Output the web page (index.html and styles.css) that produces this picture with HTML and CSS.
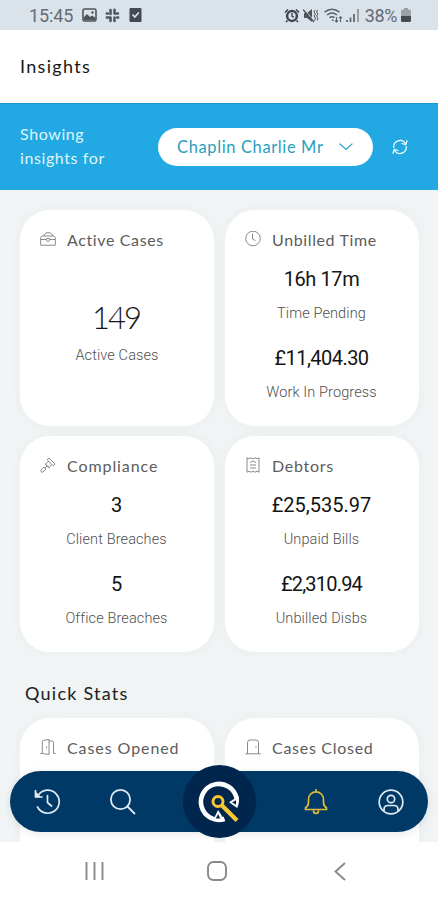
FILE: index.html
```html
<!DOCTYPE html>
<html lang="en">
<head>
<meta charset="utf-8">
<title>Insights</title>
<link rel="stylesheet" href="styles.css">
</head>
<body>
<div class="phone">
  <div class="status">
    <div class="status-left">
      <span class="time">15:45</span>
      <svg class="s-img" width="15" height="14" viewBox="0 0 15 14"><rect x="1" y="1" width="13" height="12" rx="1.5" fill="none" stroke="#4e555b" stroke-width="1.6"/><path d="M2 12V9l3-3 3 3 2-1.500 3 2V12z" fill="#4e555b"/><circle cx="10.500" cy="4.500" r="1.200" fill="#4e555b"/></svg>
      <svg class="s-slack" width="15" height="15" viewBox="0 0 15 15" fill="none" stroke="#4e555b" stroke-width="2.500" stroke-linecap="round"><path d="M5.500 2v4M1.800 5.500h1M9.500 1.800v3.700M9.500 5.500h3.500M1.800 9.500h3.700M5.500 9.500V13M9.500 9.500v3.500M12.200 9.500h1"/></svg>
      <svg width="13" height="14" viewBox="0 0 13 14"><rect x=".5" y="0" width="12" height="14" rx="1" fill="#434a51"/><path d="M3.500 6.500l2.300 2.500 4-4.500" fill="none" stroke="#dde4ea" stroke-width="1.600"/></svg>
    </div>
    <div class="status-right">
      <svg width="16" height="15" viewBox="0 0 16 15" fill="none" stroke="#3f464c"><circle cx="8" cy="8" r="4.900" stroke-width="2.500"/><path d="M8 5v3.300l2 .8" stroke-width="1.400"/><path d="M1 4.500L4 1.500M15 4.500L12 1.500M3.500 12.500L2 14M12.500 12.500L14 14" stroke-width="1.700"/></svg>
      <svg class="s-mute" width="16" height="15" viewBox="0 0 16 15"><path d="M1 5h3l5-4v13L4 10H1z" fill="#4e555b"/><path d="M1 1l11 13" stroke="#dde4ea" stroke-width="1"/><path d="M0 1.500l11 12.500" stroke="#4e555b" stroke-width="1.300"/><path d="M12 2l-1 2 1.500 2-1.500 2 1.500 2-1 2.500M14.500 2l-1 2 1.500 2-1.500 2 1.500 2-1 2.500" fill="none" stroke="#4e555b" stroke-width="1"/></svg>
      <svg class="s-wifi" width="19" height="15" viewBox="0 0 19 15" fill="none" stroke="#596067" stroke-width="1.500"><path d="M.5 4.200Q8 -1.500 15.500 4.200M3 7Q8 3 13 7M5.500 9.800Q8 7.600 10.500 9.800"/><path d="M8 11.500l1.500 1.500M12.500 9v5M11 12.500l1.500 1.500 1.500-1.500M16.500 14V8.500M15 10.200l1.500-1.500 1.500 1.500" stroke-width="1.100"/></svg>
      <svg class="s-sig" width="13" height="13" viewBox="0 0 13 13" stroke="#596067" stroke-width="1.700"><path d="M1 13v-2M4.500 13V8.500M8 13V5"/><path d="M12 13V0" stroke="#8d949a"/></svg>
      <span class="battery-text">38%</span>
      <svg width="10" height="14" viewBox="0 0 10 14"><path d="M3 0h4v1.500h1.500q1.500 0 1.500 1.500V8H0V3q0-1.500 1.500-1.500H3z" fill="#9ba2a8"/><path d="M0 8h10v4.500q0 1.500-1.500 1.500h-7Q0 14 0 12.500z" fill="#444b51"/></svg>
    </div>
  </div>

  <header class="header"><h1>Insights</h1></header>

  <section class="filter">
    <p class="filter-label">Showing<br><span>insights for</span></p>
    <div class="select"><span>Chaplin Charlie Mr</span>
      <svg width="14" height="8" viewBox="0 0 14 8" fill="none" stroke="#35a3c5" stroke-width="1.200" stroke-linecap="round"><path d="M1 1l6 5.500L13 1"/></svg>
    </div>
    <svg class="refresh" width="16" height="16" viewBox="0 0 16 16" fill="none" stroke="#fff" stroke-width="1.200" stroke-linecap="round" stroke-linejoin="round"><path d="M1.800 8.500A6.200 6.200 0 0 1 13.500 5M14.200 7.500A6.200 6.200 0 0 1 2.500 11"/><path d="M15 1.800L13.700 5.700 10 4.500M1 14.200L2.300 10.300 6 11.500"/></svg>
  </section>

  <main class="content">
    <div class="grid">
      <article class="card">
        <h2 class="tight"><svg class="icon" viewBox="0 0 16 16"><path d="M2 5h12l1.300 1.500v7.700H.7V6.500zM3.500 5L6 1.800h4.500L13 5M1 8.500h5M10 8.500h5M6.300 7.500h3.400v2L8 10.500 6.300 9.500z"/></svg><span>Active Cases</span></h2>
        <div class="metric single"><strong>149</strong><span>Active Cases</span></div>
      </article>
      <article class="card">
        <h2 class="tight"><svg class="icon" viewBox="0 0 16 16"><circle cx="8" cy="7.500" r="7.300"/><path d="M7.500 3V8l3 1.700"/></svg><span>Unbilled Time</span></h2>
        <div class="metric"><strong class="v-time">16h 17m</strong><span>Time Pending</span></div>
        <div class="metric"><strong class="v-wip">£11,404.30</strong><span>Work In Progress</span></div>
      </article>
      <article class="card">
        <h2 class="wide"><svg class="icon" viewBox="0 0 16 16"><path d="M7.200 2.800L9 1l6 6-1.800 1.800zM8.500 4.200L5.500 7.200 8.800 10.500l3-3M4.800 6.500l4.700 4.700M7 9l-2 2M5.200 10.800l.6 1.200-2.800 3q-1 .6-1.800-.2t-.1-1.900L4 10.200z"/></svg><span>Compliance</span></h2>
        <div class="metric"><strong>3</strong><span>Client Breaches</span></div>
        <div class="metric"><strong>5</strong><span>Office Breaches</span></div>
      </article>
      <article class="card">
        <h2><svg class="icon" viewBox="0 0 16 16"><path d="M2 .8l2 1 2-1 2 1 2-1 2 1 2-1v14.400l-2-1-2 1-2-1-2 1-2-1-2 1zM5 5.500l3-1.500 3 1.500M5 8h6M5 11h6"/></svg><span>Debtors</span></h2>
        <div class="metric"><strong>£25,535.97</strong><span>Unpaid Bills</span></div>
        <div class="metric"><strong class="v-disbs">£2,310.94</strong><span>Unbilled Disbs</span></div>
      </article>
    </div>
    <h3>Quick Stats</h3>
    <div class="grid">
      <article class="card">
        <h2 class="open"><svg class="icon" viewBox="0 0 16 16"><path d="M.3 14.500h2V3q0-1.500 1.500-1.700L9 .5v15l-6.700-1M9 2h3q1.500 0 1.500 1.500v11h2M6.500 7.500v1.500"/></svg><span>Cases Opened</span></h2>
      </article>
      <article class="card">
        <h2><svg class="icon" viewBox="0 0 16 16"><path d="M.3 14.800h15.400M2.500 14.800V3.500q0-2.500 2.500-2.500h6q2.500 0 2.500 2.500v11.300M11 7.500v1.500"/></svg><span>Cases Closed</span></h2>
      </article>
    </div>
  </main>

  <nav class="tabs">
    <svg width="27" height="27" viewBox="0 0 27 27" fill="none" stroke="#dfe9f3" stroke-width="1.700" stroke-linecap="round" stroke-linejoin="round"><path d="M4.500 6.800A11.500 11.500 0 1 1 3.500 19M1.500 2.500v6.500h6.500M13.500 7.500v7l4 3.500"/><path d="M2 5l3.500 3.500H2z" fill="#dfe9f3"/></svg>
    <svg width="27" height="27" viewBox="0 0 27 27" fill="none" stroke="#dfe9f3" stroke-width="1.800" stroke-linecap="round"><circle cx="11.500" cy="11.500" r="9.600"/><path d="M18.500 18.500L25.500 25.500"/></svg>
    <div class="home">
      <svg width="44" height="44" viewBox="0 0 44 44" fill="none"><path d="M39.600 18.500A18 18 0 1 0 27.500 39" stroke="#fff" stroke-width="4.600"/><path d="M32 22.200l9.500-6.200q1.500 6-1.300 12zM21 30l7 10.500q-6 1.800-12 0z" fill="#fff"/><path d="M35 22.300l4-2v4.500zM21.200 34l2 4.500h-4.500z" fill="#00264e"/><circle cx="21" cy="21.500" r="5" fill="#00264e" stroke="#f6c72f" stroke-width="3"/><path d="M25 25.500L40 40.500" stroke="#f6c72f" stroke-width="4.300"/></svg>
    </div>
    <svg class="bell" width="24" height="26" viewBox="0 0 24 26" fill="none" stroke="#dfbd3a" stroke-width="1.700" stroke-linejoin="round"><path d="M12 0v2.500M1.500 20.500v-1.800q3-1.500 3-5.500V10.300a7.500 7.500 0 0 1 15 0V13.200q0 4 3 5.500v1.800zM9.500 21.500q0 3 2.500 3t2.500-3"/></svg>
    <svg width="26" height="26" viewBox="0 0 26 26" fill="none" stroke="#dfe9f3" stroke-width="1.700"><circle cx="13" cy="13" r="11.800"/><circle cx="13" cy="10" r="3.700"/><path d="M6 22v-1.500q0-4 4-4h6q4 0 4 4V22"/></svg>
  </nav>

  <footer class="system">
    <svg width="19" height="18" viewBox="0 0 19 18" stroke="#85898c" stroke-width="1.900"><path d="M1.500 0v18M9.500 0v18M17.500 0v18"/></svg>
    <svg class="sys-home" width="20" height="20" viewBox="0 0 20 20" fill="none" stroke="#85898c" stroke-width="1.900"><rect x="1" y="1" width="18" height="18" rx="5.500"/></svg>
    <svg width="12" height="19" viewBox="0 0 12 19" fill="none" stroke="#85898c" stroke-width="1.900"><path d="M11 1L1.500 9.500 11 18"/></svg>
  </footer>
</div>
</body>
</html>
```

FILE: styles.css
```css
* { box-sizing: border-box; }
body { margin: 0; font-family: Roboto, sans-serif; background: #fff; }
h1, h2, h3, p { margin: 0; font-weight: 400; }
svg { display: block; flex: none; }
.phone { position: relative; width: 438px; height: 900px; display: flex; flex-direction: column; overflow: hidden; background: #fff; }
.status { height: 30px; flex: none; background: #dbe3ea; display: flex; justify-content: space-between; align-items: center; padding: 0 27px 0 29px; color: #656b71; font-size: 18px; }
.status-left, .status-right { display: flex; align-items: center; }
.time { width: 53px; letter-spacing: -.1px; }
.s-img { margin-right: 8px; }
.s-slack { margin-right: 9px; }
.s-mute { margin-left: 3px; }
.s-wifi { margin-left: 5px; }
.s-sig { margin-left: 3px; }
.battery-text { margin: 0 4px 0 6px; letter-spacing: -.4px; }
.header { height: 73px; flex: none; padding: 0 20px 2px; display: flex; align-items: center; }
h1 { font: 400 18px/24px Lato, sans-serif; letter-spacing: 1.3px; color: #171717; }
.filter { height: 87px; flex: none; background: #22a9e3; border-top: 1px solid #1b98d1; display: flex; align-items: center; padding-left: 20px; }
.filter-label { width: 138px; padding-bottom: 2px; font: 400 16px/24px Lato, sans-serif; letter-spacing: .6px; color: #def5fc; }
.select { width: 215px; height: 38px; border-radius: 19px; background: #fff; display: flex; align-items: center; justify-content: space-between; padding: 0 20px 0 19px; color: #299fbe; font: 400 16.500px/24px Lato, sans-serif; letter-spacing: .62px; }
.refresh { margin-left: 19px; }
.content { flex: 1; min-height: 0; overflow: hidden; background: #f0f4f4; padding: 20px 19px 0 20px; }
.grid { display: grid; grid-template-columns: 194px 194px; column-gap: 11px; row-gap: 10px; }
.card { height: 216px; background: #fff; border-radius: 30px; padding: 20px 0 0; display: flex; flex-direction: column; box-shadow: 0 0 12px rgba(70, 85, 85, .04); }
h2 { display: flex; align-items: center; gap: 11px; height: 20px; padding-left: 20px; margin-bottom: 15px; color: #5c5c5c; font: 400 16px/20px Lato, sans-serif; letter-spacing: .72px; }
h2.tight { letter-spacing: .62px; }
h2.wide, h2.open { letter-spacing: .92px; }
.icon { width: 16px; height: 16px; margin-top: -2px; fill: none; stroke: #7d7d7d; stroke-width: .9; }
.metric { height: 79px; margin-right: 1px; display: flex; flex-direction: column; align-items: center; gap: 11px; }
.metric strong { font: 400 20px/28px Roboto, sans-serif; color: #141414; }
.metric .v-time { letter-spacing: -.4px; }
.metric .v-wip { letter-spacing: -.55px; }
.metric .v-disbs { letter-spacing: -.8px; }
.metric span { font: 300 14.500px/20px Roboto, sans-serif; letter-spacing: .12px; color: #4f4f4f; }
.metric.single { height: auto; margin-right: 0; padding-top: 33px; gap: 10px; }
.metric.single strong { font: 300 31px/38px Lato, sans-serif; letter-spacing: -2px; padding-right: 2px; }
h3 { height: 66px; padding: 28px 0 0 5px; font: 400 18px/26px Lato, sans-serif; letter-spacing: 1.250px; color: #202020; }
.tabs { position: absolute; left: 10px; top: 771px; width: 418px; height: 61px; border-radius: 31px; background: #003866; display: flex; align-items: center; justify-content: space-between; padding: 0 24px; box-shadow: 0 2px 8px rgba(0, 30, 60, .1); }
.home { width: 73px; height: 73px; margin: 0 2px 0 -2px; border-radius: 50%; background: #00264e; display: flex; align-items: center; justify-content: center; flex: none; }
.bell { margin: 0 2px 0 -2px; }
.system { height: 58px; flex: none; background: #fff; display: flex; align-items: center; justify-content: space-between; padding: 0 92px 0 85px; }
.sys-home { margin: 0 2px 0 -2px; }
```
